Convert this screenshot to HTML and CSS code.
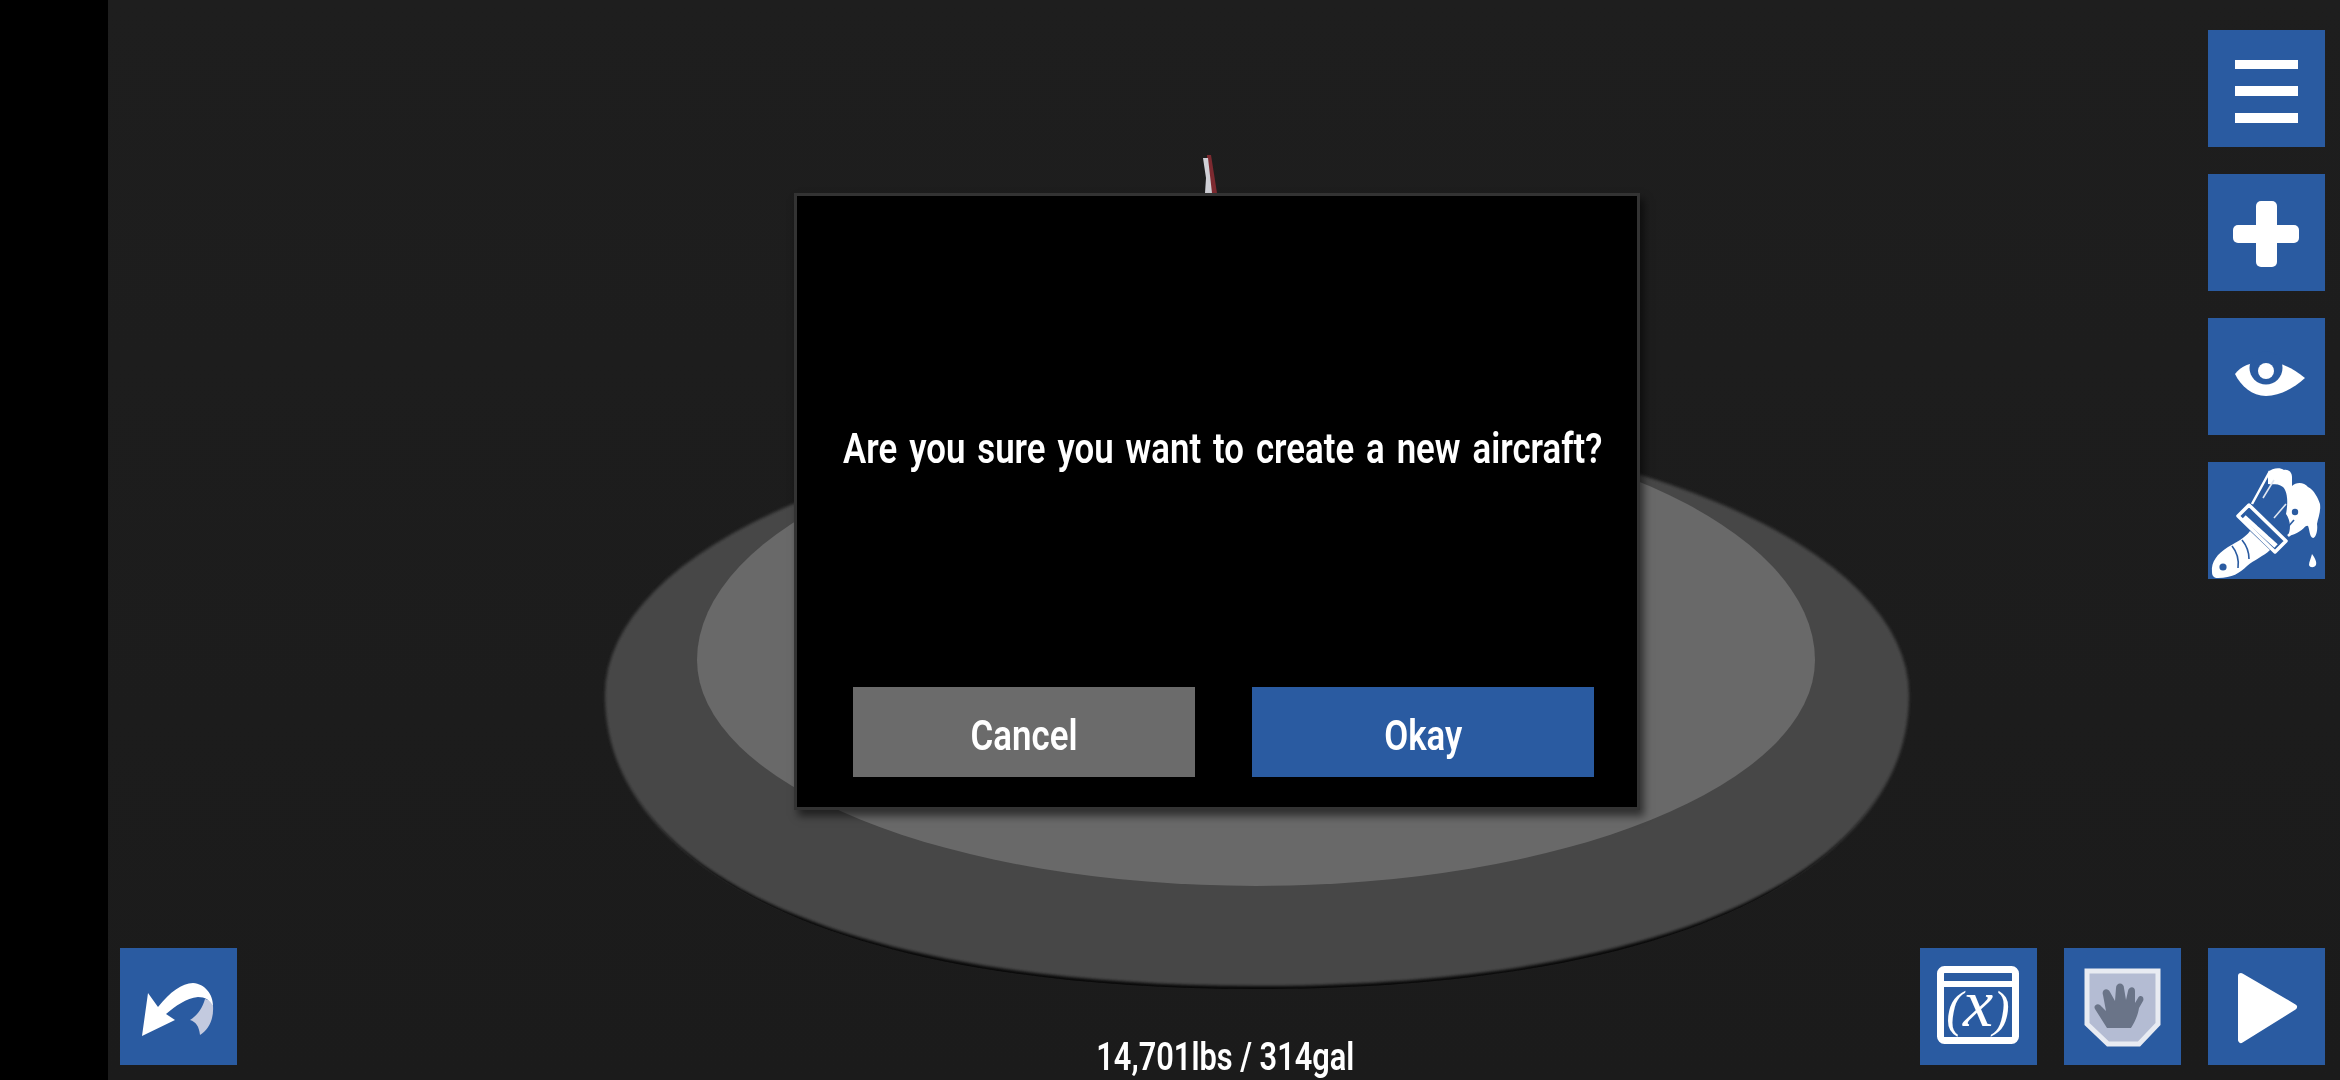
FILE: index.html
```html
<!DOCTYPE html>
<html lang="en">
<head>
<meta charset="utf-8">
<title>New aircraft</title>
<link rel="stylesheet" href="styles.css">
</head>
<body>
<div class="app">
  <aside class="gutter"></aside>
  <main class="stage">
    <svg class="scene" viewBox="108 0 2232 1080" width="2232" height="1080" aria-hidden="true">
      <defs><filter id="soft"><feGaussianBlur stdDeviation="1.8"/></filter></defs>
      <path class="sliver-red" d="M1207 155 L1211 155 L1217 193 L1208 193 Z"/>
      <path class="sliver-white" d="M1203 158 L1208 158 L1212 193 L1205 193 L1206 178 Z"/>
      <path class="pad-edge" d="M609 698 A648 272 0 0 1 1905 698 C1905 878 1661 989 1257 989 C853 989 609 878 609 698 Z"/>
      <path class="pad-outer" filter="url(#soft)" d="M605 695 A652 272 0 0 1 1909 695 C1909 875 1661 986 1257 986 C853 986 605 875 605 695 Z"/>
      <path class="pad-inner" d="M697 660 A559 245 0 0 1 1815 660 A559 226 0 0 1 697 660 Z"/>
    </svg>

    <nav class="toolbar">
      <button class="tool" type="button" aria-label="Menu">
        <svg viewBox="0 0 117 117"><rect class="w" x="27" y="30" width="63" height="9"/><rect class="w" x="27" y="56" width="63" height="10"/><rect class="w" x="27" y="83" width="63" height="10"/></svg>
      </button>
      <button class="tool" type="button" aria-label="Add">
        <svg viewBox="0 0 117 117"><rect class="w" x="48" y="27" width="21" height="66" rx="5"/><rect class="w" x="25" y="51" width="66" height="18" rx="5"/></svg>
      </button>
      <button class="tool" type="button" aria-label="View">
        <svg viewBox="0 0 117 117"><path class="w" d="M27 56 C33 48 42 44 58 44 C74 44 84 50 97 60 C86 70 72 78 58 78 C44 78 33 68 27 56 Z"/><circle class="b" cx="58" cy="50" r="16.5"/><circle class="w" cx="58" cy="53" r="8"/></svg>
      </button>
      <button class="tool" type="button" aria-label="Paint">
        <svg viewBox="0 0 117 117">
          <path class="w" d="M4 110 C3 100 9 92 20 85 C30 79 37 76 42 69 L62 88 C56 94 46 98 39 104 C32 111 24 116 10 116 C6 116 4 114 4 110 Z"/>
          <circle class="b" cx="15" cy="105" r="3.6"/>
          <path class="bl" d="M24 84 C29 90 31 98 30 106 M34 78 C39 84 41 90 41 97"/>
          <path class="b ws" d="M30 54 L41 43 L78 79 L67 90 Z"/>
          <path class="wl" d="M36 55 L68 84"/>
          <circle class="b" cx="42" cy="54" r="1.6"/><circle class="b" cx="51" cy="63" r="1.6"/><circle class="b" cx="62" cy="73" r="1.6"/>
          <path class="wl2" d="M44 42 L62 9 M80 74 C88 66 96 62 104 62"/>
          <path class="w" d="M60 10 C64 6 72 5 76 8 C80 7 84 10 84 15 L84 24 C88 20 96 20 100 25 C106 28 110 36 112 42 C113 50 110 56 109 62 C110 68 108 76 105 76 C101 75 102 66 99 62 C95 68 89 72 80 74 C84 64 81 56 78 52 C80 42 80 30 75 25 C70 21 64 23 60 22 Z"/>
          <circle class="b" cx="87" cy="50" r="3.2"/>
          <path class="bl" d="M86 58 L79 66"/>
          <path class="wl3" d="M66 18 L55 36 M78 42 L66 56"/>
          <path class="w" d="M104 92 C107 96 109 100 108 103 C106 106 102 106 101 103 C101 100 103 96 104 92 Z"/>
        </svg>
      </button>
    </nav>

    <section class="dialog" role="dialog" aria-modal="true">
      <p class="message"><span class="narrow">Are you sure you want to create a new aircraft?</span></p>
      <div class="actions">
        <button class="action cancel" type="button"><span class="narrow">Cancel</span></button>
        <button class="action okay" type="button"><span class="narrow">Okay</span></button>
      </div>
    </section>

    <footer class="bottombar">
      <button class="tool" type="button" aria-label="Undo">
        <svg viewBox="0 0 117 117"><path class="g" d="M93 58 C94 72 88 82 80 87 C79 78 76 74 70 72 C76 68 82 62 85 51 C90 52 92 54 93 58 Z"/><path class="w" d="M22 88 L28 45 L38 59 C50 44 62 35 73 35 C85 36 93 46 93 58 C90 52 85 49 78 49 C66 50 56 58 46 66 L55 72 Z"/></svg>
      </button>
      <div class="readout"><span class="narrow">14,701lbs / 314gal</span></div>
      <div class="tool-group">
        <button class="tool" type="button" aria-label="Variables">
          <svg viewBox="0 0 117 117"><rect class="frame" x="20.5" y="21.5" width="75" height="71" rx="4"/><rect class="w" x="20" y="33" width="76" height="6"/><text class="vars" x="58" y="78" text-anchor="middle"><tspan class="paren">(</tspan><tspan class="ex">x</tspan><tspan class="paren">)</tspan></text></svg>
        </button>
        <button class="tool" type="button" aria-label="Touch mode">
          <svg viewBox="0 0 117 117"><path class="shield" d="M23 23 H94 V76 L75 96 H44 L23 76 Z"/><path class="hand" d="M43 80 L67 80 C72 72 74 66 75 60 L79 53 C81 49 76 46 74 50 L71 55 L71 43 C71 38 65 38 64 43 L62 52 L60 40 C60 34 52 34 52 40 L51 53 L46 44 C44 39 37 41 39 47 L42 63 L36 57 C33 55 29 58 31 61 Z"/></svg>
        </button>
        <button class="tool" type="button" aria-label="Play">
          <svg viewBox="0 0 117 117"><path class="play" d="M33 28 L86 59 L33 92 Z"/></svg>
        </button>
      </div>
    </footer>
  </main>
</div>
</body>
</html>
```
FILE: styles.css
```css
* { box-sizing: border-box; }
html, body { margin: 0; height: 100%; background: #000; overflow: hidden; }
body { font-family: Roboto, "Open Sans", "Liberation Sans", sans-serif; color: #fff; }

.app { display: flex; width: 2340px; height: 1080px; }
.gutter { width: 108px; flex: none; background: #000; }
.stage { position: relative; flex: 1; background: linear-gradient(#1e1e1e, #1b1b1b); overflow: hidden; }
.scene { position: absolute; inset: 0; display: block; }

.sliver-red { fill: #7c2a30; }
.sliver-white { fill: #d0d0d6; }
.pad-edge { fill: #070707; }
.pad-outer { fill: #474747; }
.pad-inner { fill: #696969; }

.tool {
  display: block;
  flex: none;
  width: 117px;
  height: 117px;
  padding: 0;
  border: 0;
  background: #2a5ba1;
  overflow: hidden;
}
.tool svg { display: block; width: 117px; height: 117px; }
.w { fill: #fff; }
.b { fill: #2a5ba1; }
.g { fill: #c3cadf; }
.bl { fill: none; stroke: #2a5ba1; stroke-width: 1.6; }
.ws { stroke: #fff; stroke-width: 3.5; stroke-linejoin: round; }
.wl { fill: none; stroke: #fff; stroke-width: 5; }
.wl2 { fill: none; stroke: #fff; stroke-width: 2.5; }
.wl3 { fill: none; stroke: #dfe5f0; stroke-width: 1.6; }
.frame { fill: none; stroke: #fff; stroke-width: 7; }
.vars { fill: #fff; font-family: "Liberation Serif", serif; font-style: italic; }
.paren { font-size: 50px; }
.ex { font-size: 68px; }
.shield { fill: #b4bcd3; stroke: #e8ebf2; stroke-width: 5; }
.hand { fill: #6a7488; }
.play { fill: #fff; stroke: #fff; stroke-width: 6; stroke-linejoin: round; }

.toolbar {
  position: absolute;
  top: 30px;
  right: 15px;
  display: flex;
  flex-direction: column;
  gap: 27px;
}

.dialog {
  position: absolute;
  top: 193px;
  left: 686px;
  display: flex;
  flex-direction: column;
  width: 846px;
  height: 617px;
  border: 3px solid #333;
  background: #000;
  box-shadow: 4px 6px 8px rgba(0, 0, 0, 0.55);
}
.message {
  flex: 1;
  display: flex;
  align-items: center;
  justify-content: center;
  margin: 0;
  padding: 12px 0 0 12px;
  font-size: 43px;
  font-weight: 600;
  word-spacing: 4px;
  white-space: nowrap;
}
.narrow { display: inline-block; transform: scaleX(0.81); white-space: nowrap; }
.actions {
  display: flex;
  justify-content: space-between;
  padding: 0 43px 30px 56px;
}
.action {
  width: 342px;
  height: 90px;
  padding: 5px 0 0;
  border: 0;
  color: #fff;
  font-family: inherit;
  font-size: 43px;
  font-weight: 600;
}
.cancel { background: #6b6b6b; }
.okay { background: #2a5ba1; }

.bottombar {
  position: absolute;
  left: 12px;
  right: 15px;
  bottom: 15px;
  display: flex;
  justify-content: space-between;
  align-items: flex-end;
}
.tool-group { display: flex; gap: 27px; }
.readout {
  position: absolute;
  left: 0;
  width: 2210px;
  bottom: -14px;
  text-align: center;
  font-size: 38px;
  font-weight: 600;
  line-height: 44px;
}
```
